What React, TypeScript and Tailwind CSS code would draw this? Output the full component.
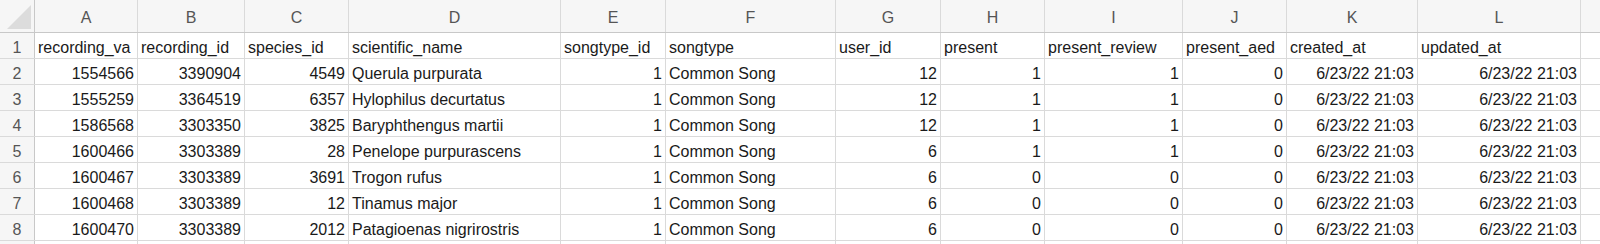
const COLS = ["A", "B", "C", "D", "E", "F", "G", "H", "I", "J", "K", "L", ""];
const WIDTHS = [
  "w-[103px]", "w-[107px]", "w-[104px]", "w-[212px]", "w-[105px]", "w-[170px]",
  "w-[105px]", "w-[104px]", "w-[138px]", "w-[104px]", "w-[131px]", "w-[163px]", "w-[40px]",
];
// which columns hold numbers (right aligned)
const NUMERIC = [true, true, true, false, true, false, true, true, true, true, true, true, false];

const HEADERS = [
  "recording_va", "recording_id", "species_id", "scientific_name", "songtype_id", "songtype",
  "user_id", "present", "present_review", "present_aed", "created_at", "updated_at", "",
];

const ROWS: string[][] = [
  ["1554566", "3390904", "4549", "Querula purpurata", "1", "Common Song", "12", "1", "1", "0"],
  ["1555259", "3364519", "6357", "Hylophilus decurtatus", "1", "Common Song", "12", "1", "1", "0"],
  ["1586568", "3303350", "3825", "Baryphthengus martii", "1", "Common Song", "12", "1", "1", "0"],
  ["1600466", "3303389", "28", "Penelope purpurascens", "1", "Common Song", "6", "1", "1", "0"],
  ["1600467", "3303389", "3691", "Trogon rufus", "1", "Common Song", "6", "0", "0", "0"],
  ["1600468", "3303389", "12", "Tinamus major", "1", "Common Song", "6", "0", "0", "0"],
  ["1600470", "3303389", "2012", "Patagioenas nigrirostris", "1", "Common Song", "6", "0", "0", "0"],
].map((r) => [...r, "6/23/22 21:03", "6/23/22 21:03", ""]);

export default function App() {
  return (
    <div className="h-[244px] w-[1600px] overflow-hidden bg-white text-[16px] leading-[18px] text-[#1a1a1a] font-['Liberation_Sans',Arial,sans-serif]">
      {/* column letters */}
      <div className="flex h-[33px] border-b border-[#c8c8c8] bg-[#f6f6f6]">
        <div className="relative w-[35px] shrink-0 border-r border-[#c8c8c8]">
          <div className="absolute bottom-[3px] right-[3px] h-0 w-0 [border-bottom:24px_solid_#dcdcdc] [border-left:24px_solid_transparent]" />
        </div>
        {COLS.map((c, i) => (
          <div key={i} className={`${WIDTHS[i]} flex shrink-0 items-center justify-center border-r border-[#dadada] pt-[4px] text-[#555]`}>
            {c}
          </div>
        ))}
      </div>

      <Row num="1" cells={HEADERS} header />
      {ROWS.map((r, i) => (
        <Row key={i} num={String(i + 2)} cells={r} />
      ))}
      <Row num="" cells={COLS.map(() => "")} />
    </div>
  );
}

function Row({ num, cells, header = false }: { num: string; cells: string[]; header?: boolean }) {
  return (
    <div className="flex h-[26px] border-b border-[#dadada]">
      <div className="flex w-[35px] shrink-0 items-end justify-center border-r border-[#c8c8c8] bg-[#f6f6f6] pb-[1px] text-[#555]">
        {num}
      </div>
      {cells.map((v, i) => (
        <div
          key={i}
          className={`${WIDTHS[i]} flex shrink-0 items-end overflow-hidden whitespace-nowrap border-r border-[#dadada] px-[3px] pb-[1px] ${
            !header && NUMERIC[i] ? "justify-end" : "justify-start"
          }`}
        >
          {v}
        </div>
      ))}
    </div>
  );
}
